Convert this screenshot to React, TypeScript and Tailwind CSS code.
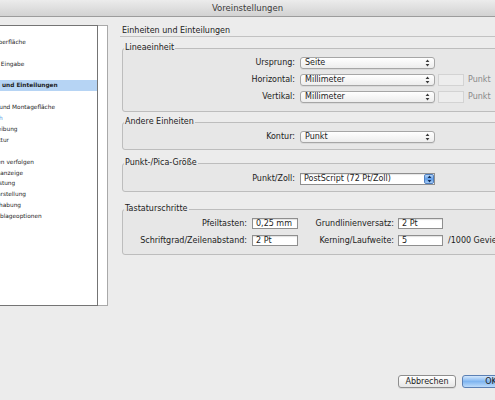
import React from 'react';

const listItems = [
  'Allgemein',
  'Benutzeroberfläche',
  'Eingabe',
  'Erweiterte Eingabe',
  'Satz',
  'Einheiten und Einteilungen',
  'Raster',
  'Hilfslinien und Montagefläche',
  'Wörterbuch',
  'Rechtschreibung',
  'Autokorrektur',
  'Notizen',
  'Änderungen verfolgen',
  'Textmodusanzeige',
  'Anzeigeleistung',
  'Schwarzdarstellung',
  'Dateihandhabung',
  'Zwischenablageoptionen',
];

const Arrows: React.FC<{ color?: string }> = ({ color = '#3a3a3a' }) => (
  <svg width="5" height="8" viewBox="0 0 5 8" className="shrink-0">
    <path d="M2.5 0.6 L4.4 3 L0.6 3 Z M2.5 7.4 L4.4 5 L0.6 5 Z" fill={color} />
  </svg>
);

const Select: React.FC<{ value: string }> = ({ value }) => (
  <div className="flex h-[12px] w-[135px] items-center justify-between rounded-[3px] border border-[#a6a6a6] bg-linear-to-b from-white to-[#ededed] px-[4px] text-[8px] leading-none shadow-[0_1px_0_rgba(0,0,0,0.06)]">
    <span>{value}</span>
    <Arrows />
  </div>
);

const Field: React.FC<{ value: string; w: string }> = ({ value, w }) => (
  <div
    className={`h-[11px] ${w} border border-[#8f8f8f] bg-white pl-[3px] text-[8px] leading-[9px] shadow-[inset_0_1px_1px_rgba(0,0,0,0.12)]`}
  >
    {value}
  </div>
);

const Group: React.FC<{ title: string; className: string; children: React.ReactNode }> = ({
  title,
  className,
  children,
}) => (
  <fieldset
    className={`ml-[2px] w-[380px] rounded-[3px] border border-[#bdbdbd] bg-[#e7e7e7] ${className}`}
  >
    <legend className="ml-[1px] px-[1px] text-[8px] leading-[10px]">{title}</legend>
    {children}
  </fieldset>
);

const Row: React.FC<{ label: string; children: React.ReactNode }> = ({ label, children }) => (
  <div className="flex h-[12px] items-center">
    <span className="w-[177px] pr-[5px] text-right text-[8px] leading-none">{label}</span>
    {children}
  </div>
);

const Disabled: React.FC = () => (
  <>
    <div className="ml-[3px] h-[12px] w-[26px] border border-[#d3d3d3] bg-[#ededed]" />
    <span className="ml-[4px] text-[8px] leading-none text-[#8a8a8a]">Punkt</span>
  </>
);

export default function App() {
  return (
    <div className="flex h-[400px] w-[495px] flex-col overflow-hidden bg-[#ececec] font-['DejaVu_Sans',sans-serif] text-[#1c1c1c]">
      {/* title bar */}
      <div className="flex h-[17px] shrink-0 items-center justify-center border-b border-[#9c9c9c] bg-linear-to-b from-[#ececec] to-[#d2d2d2] text-[8.5px] text-[#3a3a3a]">
        Voreinstellungen
      </div>

      <div className="mt-[8px] flex">
        {/* category list */}
        <div className="h-[281px] w-[98px] shrink-0 overflow-hidden border-y border-r border-[#747474] bg-white">
          <div className="-ml-[32px] whitespace-nowrap text-[5.8px]">
            {listItems.map((item, i) => (
              <div
                key={item}
                className={`h-[10.9px] pl-[1px] leading-[10.9px] ${
                  i === 5 ? 'w-[140px] bg-[#b6d4f4] font-bold' : ''
                } ${i === 8 ? 'text-[#5b9be6]' : ''}`}
              >
                {item}
              </div>
            ))}
          </div>
        </div>
        <div className="h-[281px] w-[10px] shrink-0 border-y border-r border-[#a9a9a9] bg-white" />

        {/* settings */}
        <div className="ml-[12px] flex-1">
          <div className="h-[12px] border-b border-[#c2c2c2] pl-[2px] text-[8px] leading-[11px]">
            Einheiten und Einteilungen
          </div>

          <Group title="Lineaeinheit" className="mt-[6px] pt-[4px] pb-[8px]">
            <div className="flex flex-col gap-[5px]">
              <Row label="Ursprung:">
                <Select value="Seite" />
              </Row>
              <Row label="Horizontal:">
                <Select value="Millimeter" />
                <Disabled />
              </Row>
              <Row label="Vertikal:">
                <Select value="Millimeter" />
                <Disabled />
              </Row>
            </div>
          </Group>

          <Group title="Andere Einheiten" className="mt-[5px] pt-[4px] pb-[6px]">
            <Row label="Kontur:">
              <Select value="Punkt" />
            </Row>
          </Group>

          <Group title="Punkt-/Pica-Größe" className="mt-[8px] pt-[5px] pb-[6px]">
            <Row label="Punkt/Zoll:">
              <div className="flex h-[12px] w-[135px] items-stretch border border-[#8f8f8f] bg-white shadow-[inset_0_1px_1px_rgba(0,0,0,0.1)]">
                <span className="flex-1 pl-[3px] text-[8px] leading-[10px]">PostScript (72 Pt/Zoll)</span>
                <div className="flex w-[10px] items-center justify-center rounded-[2px] border border-[#4f7fc0] bg-linear-to-b from-[#b8d7f8] via-[#5f9de8] to-[#a6cbf4]">
                  <Arrows color="#14305a" />
                </div>
              </div>
            </Row>
          </Group>

          <Group title="Tastaturschritte" className="mt-[12px] pt-[4px] pb-[8px]">
            <div className="flex flex-col gap-[6px] text-[8px] leading-none">
              <div className="flex h-[11px] items-center">
                <span className="w-[129px] pr-[5px] text-right">Pfeiltasten:</span>
                <Field value="0,25 mm" w="w-[46px]" />
                <span className="w-[100px] pr-[4px] text-right">Grundlinienversatz:</span>
                <Field value="2 Pt" w="w-[45px]" />
              </div>
              <div className="flex h-[11px] items-center">
                <span className="w-[129px] pr-[5px] text-right whitespace-nowrap">Schriftgrad/Zeilenabstand:</span>
                <Field value="2 Pt" w="w-[46px]" />
                <span className="w-[100px] pr-[4px] text-right">Kerning/Laufweite:</span>
                <Field value="5" w="w-[45px]" />
                <span className="pl-[5px] whitespace-nowrap">/1000 Geviert</span>
              </div>
            </div>
          </Group>
        </div>
      </div>

      {/* buttons */}
      <div className="mt-[69px] flex gap-[6px] pl-[398px] text-[8px]">
        <div className="flex h-[13px] w-[58px] shrink-0 items-center justify-center rounded-[3px] border border-[#8e8e8e] bg-linear-to-b from-white to-[#e6e6e6] shadow-[0_1px_0_rgba(0,0,0,0.08)]">
          Abbrechen
        </div>
        <div className="flex h-[13px] w-[58px] shrink-0 items-center justify-center rounded-[3px] border border-[#5b80b4] bg-linear-to-b from-[#d3e7fc] via-[#7fb5f0] to-[#bcdbfa]">
          OK
        </div>
      </div>
    </div>
  );
}
